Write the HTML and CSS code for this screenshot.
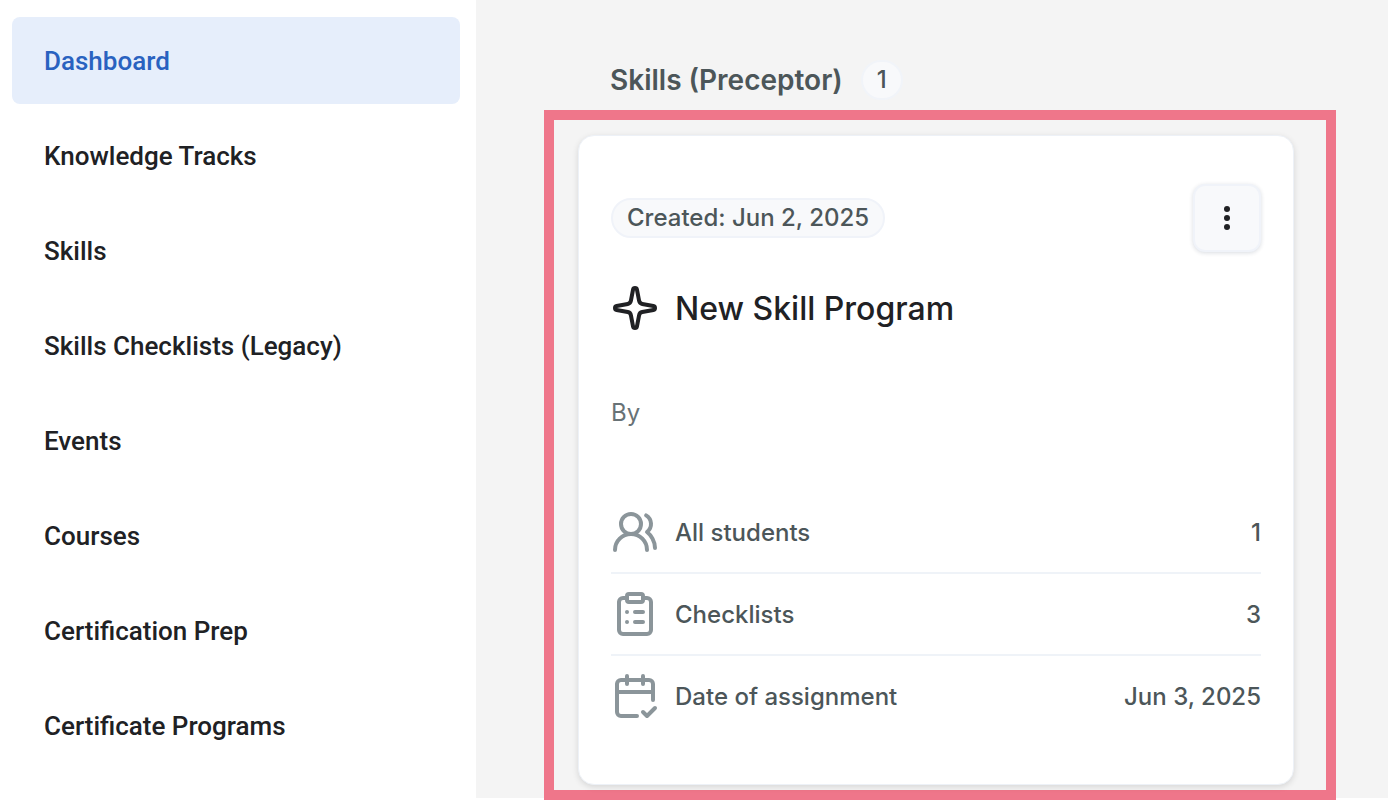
FILE: index.html
```html
<!DOCTYPE html>
<html lang="en">
<head>
    <meta charset="UTF-8">
    <meta name="viewport" content="width=device-width, initial-scale=1.0">
    <title>Dashboard</title>
    <link rel="stylesheet" href="styles.css">
</head>
<body>
    <nav class="sidebar">
        <a href="#" class="nav-item active">Dashboard</a>
        <a href="#" class="nav-item">Knowledge Tracks</a>
        <a href="#" class="nav-item">Skills</a>
        <a href="#" class="nav-item">Skills Checklists (Legacy)</a>
        <a href="#" class="nav-item">Events</a>
        <a href="#" class="nav-item">Courses</a>
        <a href="#" class="nav-item">Certification Prep</a>
        <a href="#" class="nav-item">Certificate Programs</a>
    </nav>

    <main class="content">
        <div class="section-header">
            <h2>Skills (Preceptor)</h2>
            <span class="count">1</span>
        </div>

        <section class="highlight">
            <article class="card">
                <div class="card-top">
                    <span class="chip">Created: Jun 2, 2025</span>
                    <button type="button" class="menu-btn" aria-label="More options">
                        <svg width="8" height="26" viewBox="0 0 8 26" fill="currentColor">
                            <circle cx="4" cy="4" r="3"/>
                            <circle cx="4" cy="13" r="3"/>
                            <circle cx="4" cy="22" r="3"/>
                        </svg>
                    </button>
                </div>

                <div class="card-title">
                    <svg class="icon" viewBox="0 0 24 24">
                        <path d="M11.017 2.814a1 1 0 0 1 1.966 0l1.051 5.558a2 2 0 0 0 1.594 1.594l5.558 1.051a1 1 0 0 1 0 1.966l-5.558 1.051a2 2 0 0 0-1.594 1.594l-1.051 5.558a1 1 0 0 1-1.966 0l-1.051-5.558a2 2 0 0 0-1.594-1.594l-5.558-1.051a1 1 0 0 1 0-1.966l5.558-1.051a2 2 0 0 0 1.594-1.594z"/>
                    </svg>
                    <h3>New Skill Program</h3>
                </div>

                <p class="author">By</p>

                <ul class="stats">
                    <li>
                        <svg class="icon" viewBox="0 0 24 24">
                            <path d="M18 21a8 8 0 0 0-16 0"/>
                            <circle cx="10" cy="8" r="5"/>
                            <path d="M22 20c0-3.37-2-6.5-4-8a5 5 0 0 0-.45-8.3"/>
                        </svg>
                        <span>All students</span>
                        <span class="value">1</span>
                    </li>
                    <li>
                        <svg class="icon" viewBox="0 0 24 24">
                            <rect x="8" y="2" width="8" height="4" rx="1"/>
                            <path d="M16 4h2a2 2 0 0 1 2 2v14a2 2 0 0 1-2 2H6a2 2 0 0 1-2-2V6a2 2 0 0 1 2-2h2"/>
                            <path d="M12 11h4M12 16h4M8 11h.01M8 16h.01"/>
                        </svg>
                        <span>Checklists</span>
                        <span class="value">3</span>
                    </li>
                    <li>
                        <svg class="icon" viewBox="0 0 24 24">
                            <path d="M8 2v4M16 2v4M3 10h18"/>
                            <path d="M21 14V6a2 2 0 0 0-2-2H5a2 2 0 0 0-2 2v14a2 2 0 0 0 2 2h8"/>
                            <path d="m16 20 2 2 4-4"/>
                        </svg>
                        <span>Date of assignment</span>
                        <span class="value">Jun 3, 2025</span>
                    </li>
                </ul>
            </article>
        </section>
    </main>
</body>
</html>
```
FILE: styles.css
```css
* {
    box-sizing: border-box;
    margin: 0;
    padding: 0;
}

body {
    display: flex;
    align-items: flex-start;
    min-height: 100vh;
    font-family: 'Inter', sans-serif;
    font-size: 24px;
    font-weight: 500;
    line-height: 32px;
    color: #4c5659;
    background: #fff;
}

.sidebar {
    display: flex;
    flex-direction: column;
    flex: 0 0 476px;
    gap: 8px;
    padding: 17px 16px 0 12px;
}

.nav-item {
    padding: 29px 32px 27px;
    border-radius: 8px;
    font-family: 'Roboto', sans-serif;
    font-size: 26px;
    line-height: 31px;
    color: #202124;
    text-decoration: none;
}

.nav-item.active {
    color: #2962c0;
    background: #e6eefb;
}

.content {
    flex: 1;
    padding: 60px 52px 0 68px;
    background: #f4f4f4;
}

.section-header {
    display: flex;
    align-items: center;
    gap: 18px;
    padding: 0 66px;
    margin-bottom: 10px;
}

.section-header h2 {
    font-size: 28px;
    font-weight: 600;
    line-height: 40px;
}

.count {
    padding: 2px 14px;
    border: 2px solid #f1f4f9;
    border-radius: 20px;
    background: #f8f9fb;
}

/* the frame hangs slightly below the grey area */
.highlight {
    margin-bottom: -2px;
    padding: 15px 32px 5px 24px;
    border: 10px solid #ef768a;
}

.card {
    padding: 48px 32px;
    border: 1px solid #edf1f7;
    border-radius: 16px;
    background: #fff;
    box-shadow: 0 2px 6px rgba(0, 0, 0, 0.12);
}

.card-top {
    display: flex;
    align-items: center;
    justify-content: space-between;
    margin-bottom: 32px;
}

.chip {
    padding: 0 14px;
    border: 2px solid #f0f3f9;
    border-radius: 20px;
    line-height: 36px;
    background: #f8f9fb;
}

.menu-btn {
    display: flex;
    align-items: center;
    justify-content: center;
    width: 68px;
    height: 68px;
    border: 2px solid #f0f3f9;
    border-radius: 12px;
    color: #202124;
    background: #f8f9fb;
    box-shadow: 0 1px 4px rgba(16, 40, 70, 0.16);
    cursor: pointer;
}

.icon {
    flex: none;
    width: 48px;
    height: 48px;
    fill: none;
    stroke: currentColor;
    stroke-width: 2;
    stroke-linecap: round;
    stroke-linejoin: round;
}

.card-title {
    display: flex;
    align-items: center;
    gap: 16px;
    margin-bottom: 65px;
    color: #202124;
}

.card-title h3 {
    padding-top: 2px;
    font-size: 32px;
    font-weight: 500;
    line-height: 46px;
}

.author {
    margin-bottom: 63px;
    font-weight: 400;
    color: #687276;
}

.stats {
    list-style: none;
}

.stats li {
    display: flex;
    align-items: center;
    gap: 16px;
    padding: 16px 0;
    border-bottom: 2px solid #eff3f8;
}

.stats li:last-child {
    border-bottom: none;
}

.stats span {
    padding-top: 2px;
}

.stats .icon {
    color: #8b959a;
}

.stats .value {
    margin-left: auto;
}
```
